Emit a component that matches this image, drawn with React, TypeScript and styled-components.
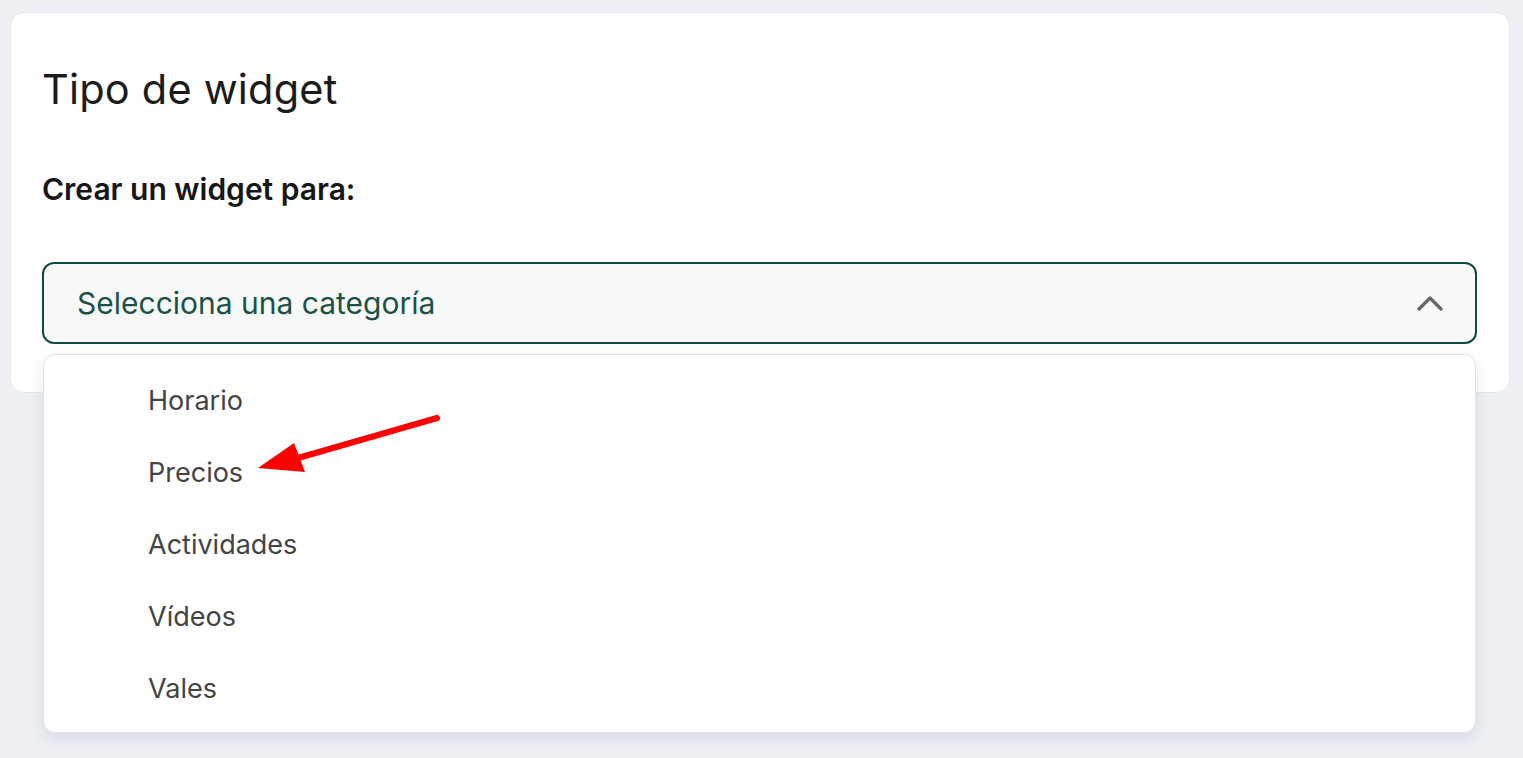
import React, { useState } from "react";
import styled, { createGlobalStyle } from "styled-components";

const GlobalStyle = createGlobalStyle`
  * { box-sizing: border-box; }
  html, body {
    margin: 0;
    padding: 0;
    background: #eef0f5;
    font-family: "Inter", "Lato", sans-serif;
  }
`;

const Page = styled.div`
  position: relative;
  width: 1523px;
  height: 758px;
  padding: 12px 13px 0 10px;
`;

const Card = styled.section`
  background: #ffffff;
  border: 1px solid #e3e6ec;
  border-radius: 14px;
  padding: 52px 32px 48px 31px;
`;

const Title = styled.h1`
  margin: 0;
  font-size: 41.5px;
  font-weight: 400;
  color: #1b1b1b;
  line-height: 48px;
  letter-spacing: 0.2px;
`;

const Label = styled.div`
  margin-top: 60px;
  font-size: 30px;
  font-weight: 600;
  color: #161616;
  line-height: 32px;
`;

const SelectWrap = styled.div`
  position: relative;
  margin-top: 57px;
`;

const SelectBox = styled.button`
  width: 100%;
  height: 82px;
  display: flex;
  align-items: center;
  justify-content: space-between;
  padding: 0 32px 0 33px;
  background: #f7f9f8;
  border: 2px solid #0f4a40;
  border-radius: 12px;
  font-family: inherit;
  font-size: 30px;
  color: #1a5247;
  cursor: pointer;
`;

const Menu = styled.ul`
  position: absolute;
  top: calc(100% + 10px);
  left: 1px;
  right: 1px;
  margin: 0;
  padding: 9px 0 8px;
  list-style: none;
  background: #ffffff;
  border: 1px solid #e2e3e8;
  border-radius: 12px;
  box-shadow: 0 6px 16px rgba(30, 40, 70, 0.1);
  z-index: 2;
`;

const Item = styled.li`
  height: 72px;
  display: flex;
  align-items: center;
  padding-left: 104px;
  font-size: 27px;
  color: #444444;
  cursor: pointer;
`;

const Arrow = styled.svg`
  position: absolute;
  left: 0;
  top: 0;
  pointer-events: none;
  z-index: 3;
`;

const items = ["Horario", "Precios", "Actividades", "Vídeos", "Vales"];

const App = () => {
  const [open, setOpen] = useState(true);

  return (
    <Page>
      <GlobalStyle />
      <Card>
        <Title>Tipo de widget</Title>
        <Label>Crear un widget para:</Label>
        <SelectWrap>
          <SelectBox onClick={() => setOpen(!open)}>
            Selecciona una categoría
            <svg width="26" height="16" viewBox="0 0 26 16">
              <path
                d="M2 14 L13 3 L24 14"
                fill="none"
                stroke="#666666"
                strokeWidth="3.2"
                strokeLinecap="round"
                strokeLinejoin="round"
              />
            </svg>
          </SelectBox>
          {open && (
            <Menu>
              {items.map((item) => (
                <Item key={item}>{item}</Item>
              ))}
            </Menu>
          )}
        </SelectWrap>
      </Card>
      <Arrow width="1523" height="758" viewBox="0 0 1523 758">
        <line
          x1="437"
          y1="418"
          x2="298"
          y2="458"
          stroke="#ff0000"
          strokeWidth="6"
          strokeLinecap="round"
        />
        <polygon points="258,468 294,443 305,472" fill="#ff0000" />
      </Arrow>
    </Page>
  );
};

export default App;
